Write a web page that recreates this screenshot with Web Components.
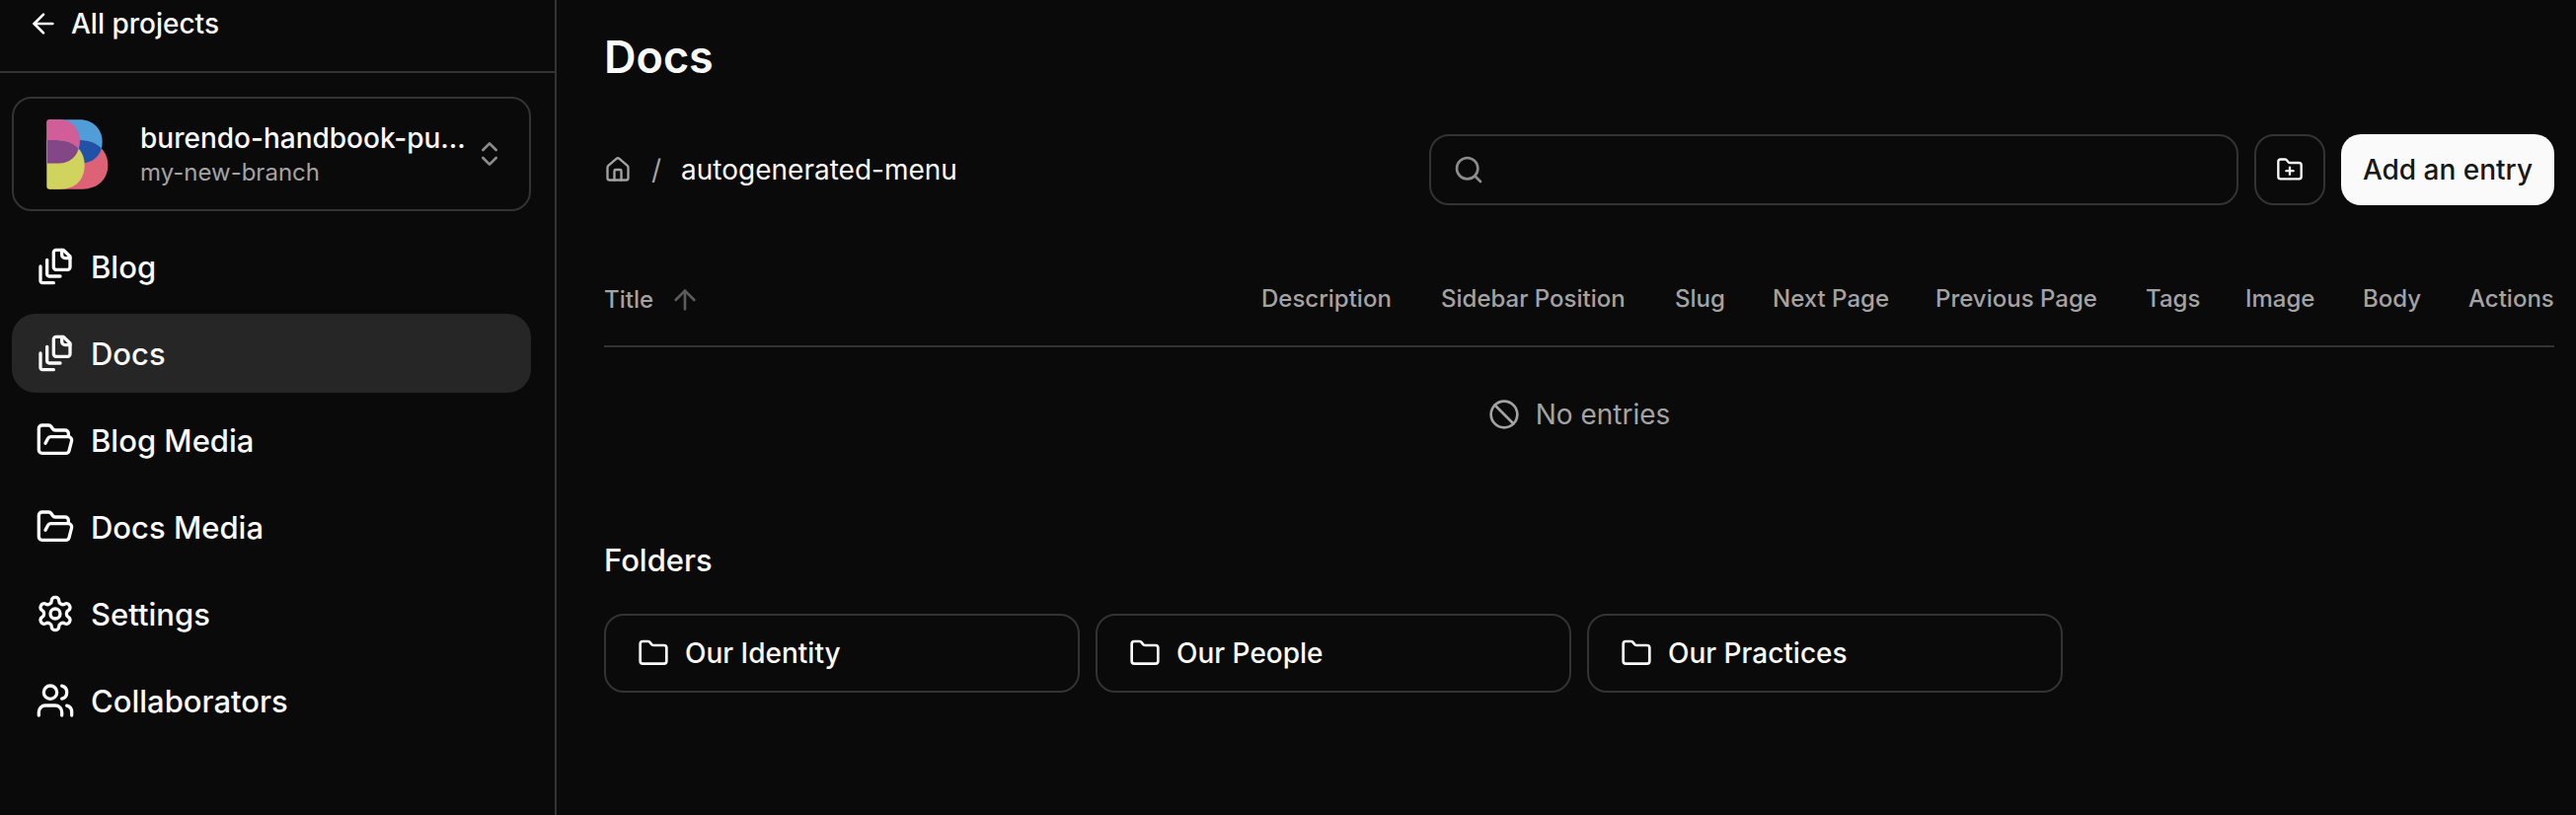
<!DOCTYPE html>
<html lang="en">
<head>
<meta charset="utf-8">
<meta name="viewport" content="width=device-width, initial-scale=1">
<title>Docs</title>
<style>
  :root {
    --bg: #0a0a0a;
    --fg: #fafafa;
    --muted: #a3a3a3;
    --faint: #5c5c5c;
    --line: #333333;
    --active: #262626;
    --radius: 20px;
  }
  body {
    margin: 0;
    background: var(--bg);
    color: var(--fg);
    font: 400 28px/40px Inter, "Liberation Sans", sans-serif;
  }
</style>
</head>
<body>
<app-shell>
  <app-sidebar slot="sidebar">
    <project-switcher slot="project" name="burendo-handbook-pu..." branch="my-new-branch"></project-switcher>
    <nav-item icon="stack">Blog</nav-item>
    <nav-item icon="stack" active>Docs</nav-item>
    <nav-item icon="folder-open">Blog Media</nav-item>
    <nav-item icon="folder-open">Docs Media</nav-item>
    <nav-item icon="settings">Settings</nav-item>
    <nav-item icon="users">Collaborators</nav-item>
  </app-sidebar>
  <page-title>Docs</page-title>
  <collection-toolbar folder="autogenerated-menu"></collection-toolbar>
  <entry-table></entry-table>
  <folder-list>
    <folder-card>Our Identity</folder-card>
    <folder-card>Our People</folder-card>
    <folder-card>Our Practices</folder-card>
  </folder-list>
</app-shell>
<script>
const define = (name, render) => customElements.define(name, class extends HTMLElement {
  connectedCallback() {
    if (this.shadowRoot) return;
    const template = document.createElement('template');
    template.innerHTML = '<style>*{box-sizing:border-box}a{color:inherit;text-decoration:none}button{font:inherit;color:inherit;cursor:pointer;margin:0}</style>' + render(this);
    this.attachShadow({ mode: 'open' }).append(template.content.cloneNode(true));
  }
});

const icons = {
  'arrow-left': '<path d="m12 19-7-7 7-7"/><path d="M19 12H5"/>',
  'arrow-up': '<path d="m5 12 7-7 7 7"/><path d="M12 19V5"/>',
  'chevrons': '<path d="m7 15 5 5 5-5"/><path d="m7 9 5-5 5 5"/>',
  'stack': '<path d="M21 7h-3a2 2 0 0 1-2-2V2"/><path d="M21 6v6.5c0 .8-.7 1.5-1.5 1.5h-7c-.8 0-1.5-.7-1.5-1.5v-9c0-.8.7-1.5 1.5-1.5H17Z"/><path d="M7 8v8.8c0 .3.2.6.4.8.2.2.5.4.8.4H15"/><path d="M3 12v8.8c0 .3.2.6.4.8.2.2.5.4.8.4H11"/>',
  'folder-open': '<path d="m6 14 1.5-2.9A2 2 0 0 1 9.24 10H20a2 2 0 0 1 1.94 2.5l-1.54 6a2 2 0 0 1-1.95 1.5H4a2 2 0 0 1-2-2V5a2 2 0 0 1 2-2h3.9a2 2 0 0 1 1.69.9l.81 1.2a2 2 0 0 0 1.67.9H18a2 2 0 0 1 2 2v2"/>',
  'settings': '<path d="M12.22 2h-.44a2 2 0 0 0-2 2v.18a2 2 0 0 1-1 1.73l-.43.25a2 2 0 0 1-2 0l-.15-.08a2 2 0 0 0-2.73.73l-.22.38a2 2 0 0 0 .73 2.73l.15.1a2 2 0 0 1 1 1.72v.51a2 2 0 0 1-1 1.74l-.15.09a2 2 0 0 0-.73 2.73l.22.38a2 2 0 0 0 2.73.73l.15-.08a2 2 0 0 1 2 0l.43.25a2 2 0 0 1 1 1.73V20a2 2 0 0 0 2 2h.44a2 2 0 0 0 2-2v-.18a2 2 0 0 1 1-1.73l.43-.25a2 2 0 0 1 2 0l.15.08a2 2 0 0 0 2.73-.73l.22-.39a2 2 0 0 0-.73-2.73l-.15-.08a2 2 0 0 1-1-1.74v-.5a2 2 0 0 1 1-1.74l.15-.09a2 2 0 0 0 .73-2.73l-.22-.38a2 2 0 0 0-2.73-.73l-.15.08a2 2 0 0 1-2 0l-.43-.25a2 2 0 0 1-1-1.73V4a2 2 0 0 0-2-2z"/><circle cx="12" cy="12" r="3"/>',
  'users': '<path d="M16 21v-2a4 4 0 0 0-4-4H6a4 4 0 0 0-4 4v2"/><circle cx="9" cy="7" r="4"/><path d="M22 21v-2a4 4 0 0 0-3-3.87"/><path d="M16 3.13a4 4 0 0 1 0 7.75"/>',
  'home': '<path d="M15 21v-8a1 1 0 0 0-1-1h-4a1 1 0 0 0-1 1v8"/><path d="M3 10a2 2 0 0 1 .709-1.528l7-5.999a2 2 0 0 1 2.582 0l7 5.999A2 2 0 0 1 21 10v9a2 2 0 0 1-2 2H5a2 2 0 0 1-2-2z"/>',
  'search': '<circle cx="11" cy="11" r="8"/><path d="m21 21-4.3-4.3"/>',
  'folder-plus': '<path d="M12 10v6"/><path d="M9 13h6"/><path d="M20 20a2 2 0 0 0 2-2V8a2 2 0 0 0-2-2h-7.9a2 2 0 0 1-1.69-.9L9.6 3.9A2 2 0 0 0 7.93 3H4a2 2 0 0 0-2 2v13a2 2 0 0 0 2 2Z"/>',
  'folder': '<path d="M20 20a2 2 0 0 0 2-2V8a2 2 0 0 0-2-2h-7.9a2 2 0 0 1-1.69-.9L9.6 3.9A2 2 0 0 0 7.93 3H4a2 2 0 0 0-2 2v13a2 2 0 0 0 2 2Z"/>',
  'ban': '<circle cx="12" cy="12" r="10"/><path d="m4.9 4.9 14.2 14.2"/>'
};

define('ui-icon', el => `
  <style>
    :host { display: block; flex: none; width: 32px; height: 32px; }
    :host([size="sm"]) { width: 28px; height: 28px; }
    :host([size="lg"]) { width: 40px; height: 40px; }
    svg { display: block; width: 100%; height: 100%; }
  </style>
  <svg viewBox="0 0 24 24" fill="none" stroke="currentColor" stroke-width="2" stroke-linecap="round" stroke-linejoin="round" aria-hidden="true">${icons[el.getAttribute('name')]}</svg>`);

define('app-shell', () => `
  <style>
    :host { display: flex; min-height: 100vh; }
    main { flex: 1; min-width: 0; padding: 28px 22px 48px 48px; }
  </style>
  <slot name="sidebar"></slot>
  <main><slot></slot></main>`);

define('app-sidebar', () => `
  <style>
    :host { display: block; flex: none; box-sizing: border-box; width: 564px; border-right: 2px solid var(--line); }
    header { padding: 4px 28px 28px; border-bottom: 2px solid var(--line); }
    header a { display: inline-flex; align-items: center; gap: 12px; font-weight: 500; vertical-align: top; }
    .body { padding: 24px 24px 24px 12px; }
    nav { display: grid; gap: 8px; margin-top: 16px; }
  </style>
  <header><a href="#projects"><ui-icon name="arrow-left"></ui-icon>All projects</a></header>
  <div class="body">
    <slot name="project"></slot>
    <nav><slot></slot></nav>
  </div>`);

define('project-switcher', el => `
  <style>
    :host { display: block; }
    button { display: flex; align-items: center; width: 100%; height: 116px; padding: 0 24px; text-align: left;
      background: none; border: 2px solid var(--line); border-radius: var(--radius); }
    brand-mark { margin-right: 24px; }
    .text { flex: 1; min-width: 0; padding-top: 2px; white-space: nowrap; }
    .name { display: block; font-weight: 500; line-height: 36px; }
    .branch { display: block; font-size: 24px; line-height: 34px; color: var(--muted); }
    ui-icon { color: #8c8c8c; }
  </style>
  <button type="button">
    <brand-mark></brand-mark>
    <span class="text"><span class="name">${el.getAttribute('name')}</span><span class="branch">${el.getAttribute('branch')}</span></span>
    <ui-icon name="chevrons"></ui-icon>
  </button>`);

define('brand-mark', () => `
  <style>
    :host { display: block; flex: none; width: 80px; height: 80px; }
    svg { display: block; width: 100%; height: 100%; }
  </style>
  <svg viewBox="-28 -16 240 240" aria-hidden="true">
    <defs>
      <clipPath id="upper"><path d="M0 0H100C142 0 169 30 169 68S142 133 100 133H0Z"/></clipPath>
      <clipPath id="upper-left"><path d="M0 0H36C76 0 100 28 100 66S76 133 36 133H0Z"/></clipPath>
    </defs>
    <path fill="#dd6276" d="M8 62H100C152 62 186 94 186 138S154 211 108 211H8Z"/>
    <path fill="#509dd8" d="M6 0H100C142 0 169 30 169 68S142 133 100 133H6Z"/>
    <path fill="#2252a8" clip-path="url(#upper)" d="M0 62H100C152 62 186 94 186 138S154 211 108 211H0Z"/>
    <path fill="#d15d99" d="M0 8Q0 0 8 0H36C76 0 100 28 100 66S76 133 36 133H0Z"/>
    <path fill="#d1d35f" d="M0 62H30C84 62 115 94 115 138S88 211 42 211H8Q0 211 0 203Z"/>
    <path fill="#834687" clip-path="url(#upper-left)" d="M0 62H30C84 62 115 94 115 138S88 211 42 211H0Z"/>
    <path fill="#d15d99" d="M0 8Q0 0 8 0H36C76 0 100 28 100 66Q100 78 97 87C82 70 60 62 30 62H0Z"/>
  </svg>`);

define('nav-item', el => `
  <style>
    :host { display: block; }
    a { display: flex; align-items: center; gap: 16px; height: 80px; padding: 0 24px; border-radius: 24px;
      font-size: 31px; font-weight: 500; }
    span { padding-top: 2px; }
    :host([active]) a { background: var(--active); }
  </style>
  <a href="#"${el.hasAttribute('active') ? ' aria-current="page"' : ''}><ui-icon name="${el.getAttribute('icon')}" size="lg"></ui-icon><span><slot></slot></span></a>`);

define('page-title', () => `
  <style>
    :host { display: block; }
    h1 { margin: 0; font-size: 45px; line-height: 60px; font-weight: 600; }
  </style>
  <h1><slot></slot></h1>`);

define('collection-toolbar', el => `
  <style>
    :host { display: grid; grid-template-columns: minmax(0, 1fr) minmax(0, 1fr) auto auto; align-items: center; gap: 16px; margin-top: 48px; }
    nav { display: flex; align-items: center; gap: 20px; color: var(--muted); }
    nav [aria-current] { color: var(--fg); }
    label { display: flex; align-items: center; gap: 16px; height: 72px; padding: 0 22px;
      border: 2px solid var(--line); border-radius: var(--radius); color: #8c8c8c; cursor: text; }
    input { flex: 1; min-width: 0; padding: 0; border: 0; outline: 0; background: none; font: inherit; color: var(--fg); }
    button { display: grid; place-items: center; height: 72px; border-radius: var(--radius); font-weight: 500; white-space: nowrap; }
    .icon { width: 72px; padding: 0; background: none; border: 2px solid var(--line); }
    .primary { padding: 0 22px; border: 0; background: var(--fg); color: #171717; }
  </style>
  <nav aria-label="Breadcrumb">
    <a href="#home" aria-label="Home"><ui-icon name="home" size="sm"></ui-icon></a>
    <span>/</span>
    <span aria-current="page">${el.getAttribute('folder')}</span>
  </nav>
  <label><ui-icon name="search"></ui-icon><input type="text" aria-label="Search entries"></label>
  <button class="icon" type="button" aria-label="Create folder"><ui-icon name="folder-plus" size="sm"></ui-icon></button>
  <button class="primary" type="button">Add an entry</button>`);

const columns = [['Description', 182], ['Sidebar Position', 237], ['Slug', 99], ['Next Page', 165], ['Previous Page', 213], ['Tags', 101], ['Image', 119], ['Body', 107], ['Actions', 87]];

define('entry-table', () => `
  <style>
    :host { display: block; margin-top: 46px; }
    table { width: 100%; table-layout: fixed; border-collapse: separate; border-spacing: 0; color: var(--muted); }
    th { height: 98px; padding: 2px 0 0; border-bottom: 2px solid var(--line); text-align: left; white-space: nowrap; font-size: 24px; font-weight: 500; }
    td { padding: 48px 0; }
    .sort { display: inline-flex; align-items: center; gap: 16px; padding: 0; border: 0; background: none; vertical-align: middle; }
    .sort ui-icon { color: var(--faint); }
    .empty { display: flex; align-items: center; justify-content: center; gap: 16px; }
  </style>
  <table>
    <colgroup><col>${columns.map(([, width]) => `<col style="width:${width}px">`).join('')}</colgroup>
    <thead><tr><th scope="col" aria-sort="ascending"><button class="sort" type="button">Title<ui-icon name="arrow-up"></ui-icon></button></th>${columns.map(([name]) => `<th scope="col">${name}</th>`).join('')}</tr></thead>
    <tbody><tr><td colspan="10"><div class="empty"><ui-icon name="ban"></ui-icon>No entries</div></td></tr></tbody>
  </table>`);

define('folder-list', () => `
  <style>
    :host { display: block; margin-top: 60px; }
    h2 { margin: 0 0 34px; font-size: 31px; line-height: 40px; font-weight: 500; }
    .grid { display: grid; grid-template-columns: repeat(4, minmax(0, 1fr)); gap: 16px; }
  </style>
  <h2>Folders</h2>
  <div class="grid"><slot></slot></div>`);

define('folder-card', () => `
  <style>
    :host { display: block; }
    a { display: flex; align-items: center; gap: 16px; height: 80px; padding: 0 32px; border: 2px solid var(--line); border-radius: var(--radius); font-weight: 500; }
  </style>
  <a href="#"><ui-icon name="folder"></ui-icon><span><slot></slot></span></a>`);
</script>
</body>
</html>
